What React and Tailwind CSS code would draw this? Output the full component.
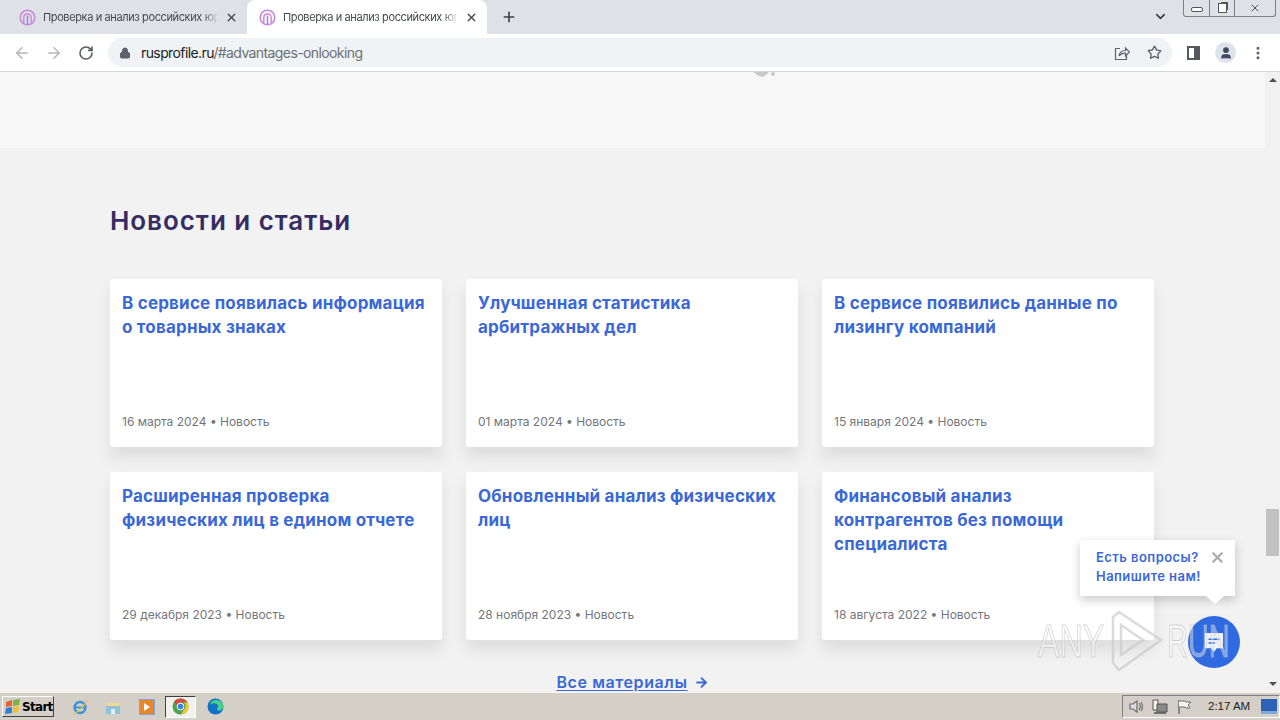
import { ArrowLeft, ArrowRight, RotateCw, Lock, Star, Plus, X, ChevronDown, MoreVertical, User } from "lucide-react";

const NEWS = [
  { title: ["В сервисе появилась информация", "о товарных знаках"], date: "16 марта 2024" },
  { title: ["Улучшенная статистика", "арбитражных дел"], date: "01 марта 2024" },
  { title: ["В сервисе появились данные по", "лизингу компаний"], date: "15 января 2024" },
  { title: ["Расширенная проверка", "физических лиц в едином отчете"], date: "29 декабря 2023" },
  { title: ["Обновленный анализ физических", "лиц"], date: "28 ноября 2023" },
  { title: ["Финансовый анализ", "контрагентов без помощи", "специалиста"], date: "18 августа 2022" },
];

const Favicon = () => (
  <svg width="17" height="17" viewBox="0 0 17 17" fill="none" className="shrink-0">
    <circle cx="8.5" cy="8.5" r="7.3" stroke="#c58be0" strokeWidth="1.6" />
    <path d="M4.8 14V8.500a3.700 3.700 0 0 1 7.400 0V14" stroke="#d78ad0" strokeWidth="1.5" />
    <path d="M8.500 15V6.500" stroke="#7f8fe0" strokeWidth="1.5" />
  </svg>
);

const Tab = ({ active }) => (
  <div className={`flex items-center h-[34px] w-[240px] pl-[12px] pr-[9px] gap-[7px] ${active ? "bg-white rounded-t-[8px]" : ""}`}>
    <Favicon />
    <span className="flex-1 min-w-0 whitespace-nowrap text-[11px] text-[#45494d] tracking-[-0.38px] [mask-image:linear-gradient(to_right,black_92%,transparent)]">Проверка и анализ российских юр</span>
    <X size={13} strokeWidth={2.6} className="text-[#45494d] shrink-0" />
  </div>
);

const NewsCard = ({ item }) => (
  <div className="h-[168px] bg-white rounded-[3px] px-3 pt-3 pb-[17px] flex flex-col justify-between shadow-[0_10px_16px_rgba(0,0,0,0.09)]">
    <div className="text-[17px] leading-6 font-bold tracking-[0.2px] text-[#3a68d8]">
      {item.title.map((line) => (
        <div key={line} className="whitespace-nowrap">{line}</div>
      ))}
    </div>
    <div className="text-[12px] leading-4 text-[#74767d]">{item.date} • Новость</div>
  </div>
);

const Taskbar = () => (
  <div className="h-[29px] shrink-0 bg-[#d4d0c8] border-t-2 border-[#f4f2ee] flex items-center relative">
    <div className="ml-[2px] w-[52px] h-[21px] bg-[#d4d0c8] border border-t-white border-l-white border-r-[#404040] border-b-[#404040] flex items-center gap-[1px] pl-[2px] text-[12px] font-bold text-black font-['DejaVu_Sans'] tracking-[-0.7px]">
      <svg width="16" height="15" viewBox="0 0 16 15" className="shrink-0">
        <path d="M1 3 7 1v6l-6 1z" fill="#e8622c" />
        <path d="M8 1l7-1-1 6-6 1z" fill="#7cb342" />
        <path d="M1 9l6-1v6l-7 1z" fill="#2f7fd6" />
        <path d="M8 8l6-1-1 6-5 1z" fill="#f6c02c" />
      </svg>
      Start
    </div>
    <div className="flex items-center ml-[17px]">
      <svg width="18" height="18" viewBox="0 0 18 18" fill="none" className="mr-[16px]">
        <circle cx="9" cy="9.500" r="5.500" stroke="#3a92d8" strokeWidth="2.4" />
        <path d="M4 9.500h10" stroke="#3a92d8" strokeWidth="2" />
        <path d="M2 16C6 15 14 8 16 2" stroke="#e8c14a" strokeWidth="1.2" />
      </svg>
      <svg width="16" height="16" viewBox="0 0 16 16" className="mr-[18px]">
        <path d="M2 4h12v4H2z" fill="#f2dc8a" />
        <path d="M1 7h14v8H1z" fill="#8fc3dc" />
        <path d="M6 10h4v5H6z" fill="#e4eef2" />
      </svg>
      <div className="w-[16px] h-[16px] mr-[10px] bg-[#e9862a] border border-[#7ea6d4] flex items-center justify-center">
        <div className="w-0 h-0 border-y-[4px] border-y-transparent border-l-[6px] border-l-white" />
      </div>
      <div className="w-[31px] h-[22px] bg-[#f2f1ee] border border-t-[#404040] border-l-[#404040] border-r-white border-b-white flex items-center justify-center mr-[11px]">
        <svg width="17" height="17" viewBox="0 0 17 17">
          <circle cx="8.500" cy="8.500" r="8" fill="#4aa54e" />
          <path d="M8.500.5a8 8 0 0 1 7 4H8.500a4 4 0 0 0-3.800 2.600L2 3.500A8 8 0 0 1 8.500.5z" fill="#d9483b" />
          <path d="M15.500 4.500a8 8 0 0 1-6.600 12l3-5a4 4 0 0 0-.6-7z" fill="#f6c52e" />
          <circle cx="8.500" cy="8.500" r="3.400" fill="#3f7fe0" stroke="#fff" strokeWidth="1" />
        </svg>
      </div>
      <svg width="17" height="17" viewBox="0 0 17 17">
        <circle cx="8.500" cy="8.500" r="8" fill="#1271c4" />
        <path d="M16.500 9c0-4.500-3.500-7-7.500-7C5 2 3 5 3 7c2-2.500 8-2.500 8 1.500 0 1-1 1.500-1 2.500 0 2 4 3 6.500-2z" fill="#49d18c" />
      </svg>
    </div>
    <div className="ml-auto h-[23px] w-[158px] border border-t-[#808080] border-l-[#808080] border-r-white border-b-white flex items-center pl-[5px] pr-[2px]">
      <svg width="16" height="15" viewBox="0 0 16 15" fill="none" stroke="#6e6e6e" strokeWidth="1.2" className="mr-[8px]">
        <path d="M2 5h3l4-3v11l-4-3H2z" fill="#dcdcdc" />
        <path d="M11 4c1.500 2 1.500 5 0 7M13 3c2 3 2 6 0 9" />
      </svg>
      <svg width="16" height="16" viewBox="0 0 16 16" className="mr-[9px]">
        <path d="M1 1h5v10H1z" fill="#f2f2f2" stroke="#555" />
        <path d="M5 5h10v8H5z" fill="#8a8a8a" stroke="#555" />
        <path d="M2 14h12" stroke="#555" strokeWidth="1.500" />
      </svg>
      <svg width="15" height="16" viewBox="0 0 15 16" fill="none" stroke="#6e6e6e" className="mr-[16px]">
        <path d="M2 1v14" strokeWidth="1.500" />
        <path d="M2 2h6l1 1h5l-3 3 2 3H9L8 8H2" fill="#f4f4f4" />
      </svg>
      <span className="text-[11.5px] text-[#222] font-['Liberation_Sans'] whitespace-nowrap">2:17 AM</span>
      <div className="ml-auto w-[16px] h-[15px] bg-[#2a63b8] border-b-[3px] border-[#7ea8d8]" />
    </div>
  </div>
);

export default function App() {
  return (
    <div className="relative w-[1280px] h-[720px] overflow-hidden flex flex-col font-['Inter',sans-serif] bg-[#f2f2f2]">
      {/* browser chrome */}
      <div className="h-[34px] shrink-0 bg-[#dee1e6] flex items-center pl-[7px] relative">
        <Tab />
        <Tab active />
        <Plus size={16} strokeWidth={2.4} className="text-[#3c4043] ml-[14px]" />
        <ChevronDown size={15} strokeWidth={2.6} className="text-[#3c4043] absolute right-[112px] top-[9px]" />
        <div className="absolute right-[4px] top-0 h-[17px] w-[93px] bg-[#dee1e6] border border-t-0 border-[#7a7f88] rounded-b-[3px] flex items-center text-[#555]">
          <div className="w-[25px] flex justify-center"><div className="w-[12px] h-[5px] mt-[3px] border border-[#555] rounded-[2px] bg-white" /></div>
          <div className="w-[26px] flex justify-center border-x border-[#7a7f88] h-full items-center">
            <div className="w-[9px] h-[10px] border border-[#555] bg-white shadow-[2px_-2px_0_-1px_#555]" />
          </div>
          <div className="flex-1 flex justify-center"><X size={12} strokeWidth={2} /></div>
        </div>
      </div>
      <div className="h-[38px] shrink-0 bg-white border-b border-[#d6d8da] flex items-center pl-[13px] pr-[13px]">
        <ArrowLeft size={18} className="text-[#b4b7bb]" strokeWidth={2} />
        <ArrowRight size={18} className="text-[#b4b7bb] ml-[14px]" strokeWidth={2} />
        <RotateCw size={16} className="text-[#5a5d61] ml-[15px]" strokeWidth={2.4} />
        <div className="ml-[14px] h-[29px] w-[1064px] rounded-full bg-[#f0f3f6] flex items-center pl-[11px] pr-[10px]">
          <Lock size={12} fill="#5f6368" className="text-[#5f6368]" strokeWidth={2} />
          <div className="ml-[10px] text-[14px] tracking-[-0.6px] whitespace-nowrap text-[#202124]">
            rusprofile.ru<span className="text-[#6b6f74]">/#advantages-onlooking</span>
          </div>
          <svg width="16" height="16" viewBox="0 0 16 16" fill="none" stroke="#5f6368" strokeWidth="1.2" className="ml-auto">
            <path d="M6 3.500H1.500v11h11V10" />
            <path d="M5 11c.5-3.500 3-5.500 6.500-5.500V3l4 4-4 4V8.200C8.500 8 6.500 9 5 11z" />
          </svg>
          <Star size={15} className="text-[#5f6368] ml-[17px]" strokeWidth={2.2} />
        </div>
        <div className="ml-[15px] w-[13px] h-[14px] border-2 border-r-[6px] border-[#55585c]" />
        <div className="ml-[15px] w-[21px] h-[21px] rounded-full bg-[#dfe3ea] flex items-center justify-center">
          <User size={14} fill="#3e4a60" className="text-[#3e4a60]" />
        </div>
        <MoreVertical size={16} className="text-[#5f6368] ml-[14px]" strokeWidth={2.6} />
      </div>

      {/* page */}
      <div className="flex-1 min-h-0 flex">
        <div className="flex-1 min-w-0 overflow-hidden flex flex-col">
          <div className="h-[76px] shrink-0 bg-[#f8f8f8] flex justify-center">
            <svg width="26" height="6" viewBox="0 0 26 6" className="ml-[262px]">
              <path d="M2 0h16l-3 3-3 2-4-1-3-2z" fill="#c9c9c9" />
              <circle cx="22" cy="2" r="2" fill="#c9c9c9" />
            </svg>
          </div>
          <div className="pl-[110px] pr-[111px]">
            <h2 className="mt-[56px] text-[26px] leading-[34px] font-semibold tracking-[0.95px] text-[#352c63]">Новости и статьи</h2>
            <div className="mt-[41px] grid grid-cols-3 gap-x-6 gap-y-[25px]">
              {NEWS.map((item) => (
                <NewsCard key={item.date} item={item} />
              ))}
            </div>
            <div className="mt-[31px] flex justify-center items-center gap-[6px] pl-[1px] text-[#3a68d8]">
              <span className="text-[16px] leading-[22px] font-semibold tracking-[0.6px] underline underline-offset-2">Все материалы</span>
              <ArrowRight size={15} strokeWidth={3} />
            </div>
          </div>
        </div>
        <div className="w-[15px] shrink-0 bg-[#f1f1f1] flex flex-col relative">
          <div className="h-[15px] flex items-center justify-center">
            <div className="w-0 h-0 border-x-[4px] border-x-transparent border-b-[4px] border-b-[#505050]" />
          </div>
          <div className="absolute top-[437px] left-[1px] w-[13px] h-[47px] bg-[#c1c1c1]" />
          <div className="mt-auto h-[15px] flex items-center justify-center">
            <div className="w-0 h-0 border-x-[4px] border-x-transparent border-t-[4px] border-t-[#505050]" />
          </div>
        </div>
      </div>

      <Taskbar />

      {/* chat widget */}
      <div className="absolute left-[1080px] top-[540px] w-[155px] h-[56px] bg-white shadow-[0_4px_10px_rgba(0,0,0,0.2)] pl-4 pt-[8px] text-[13px] leading-[19px] font-semibold tracking-[0.45px] text-[#3a68d8]">
        <div>Есть вопросы?</div>
        <div>Напишите нам!</div>
        <X size={17} strokeWidth={3} className="absolute right-[9px] top-[9px] text-[#a9a9a9]" />
        <div className="absolute left-[126px] bottom-[-8px] w-0 h-0 border-x-[9px] border-x-transparent border-t-[8px] border-t-white" />
      </div>
      <div className="absolute left-[1188px] top-[616px] w-[52px] h-[52px] rounded-full bg-[#2f6ae0] flex items-center justify-center">
        <svg width="20" height="22" viewBox="0 0 22 24">
          <path d="M2 2h18a1 1 0 0 1 1 1v15a1 1 0 0 1-1 1h-6l-3 4-3-4H2a1 1 0 0 1-1-1V3a1 1 0 0 1 1-1z" fill="#eef2fb" />
          <path d="M5 9h12M5 13h7" stroke="#2f6ae0" strokeWidth="1.6" />
        </svg>
      </div>

      {/* watermark */}
      <div className="absolute left-[1038px] top-[609px] h-[64px] flex items-center text-[46px] leading-[46px] font-['Liberation_Sans'] text-white/40 pointer-events-none [-webkit-text-stroke:1px_rgba(185,185,185,0.6)]">
        <span className="w-[67px] origin-left scale-x-[0.7] whitespace-nowrap">ANY</span>
        <svg width="62" height="64" viewBox="0 0 62 64" fill="none" stroke="rgba(200,200,200,0.65)" strokeWidth="2.5">
          <path d="M8 8v46l6 7 42-30L14 3z" />
          <path d="M16 16v30l22-15z" />
        </svg>
        <span className="w-[62px] origin-left scale-x-[0.63] whitespace-nowrap">RUN</span>
      </div>
    </div>
  );
}
